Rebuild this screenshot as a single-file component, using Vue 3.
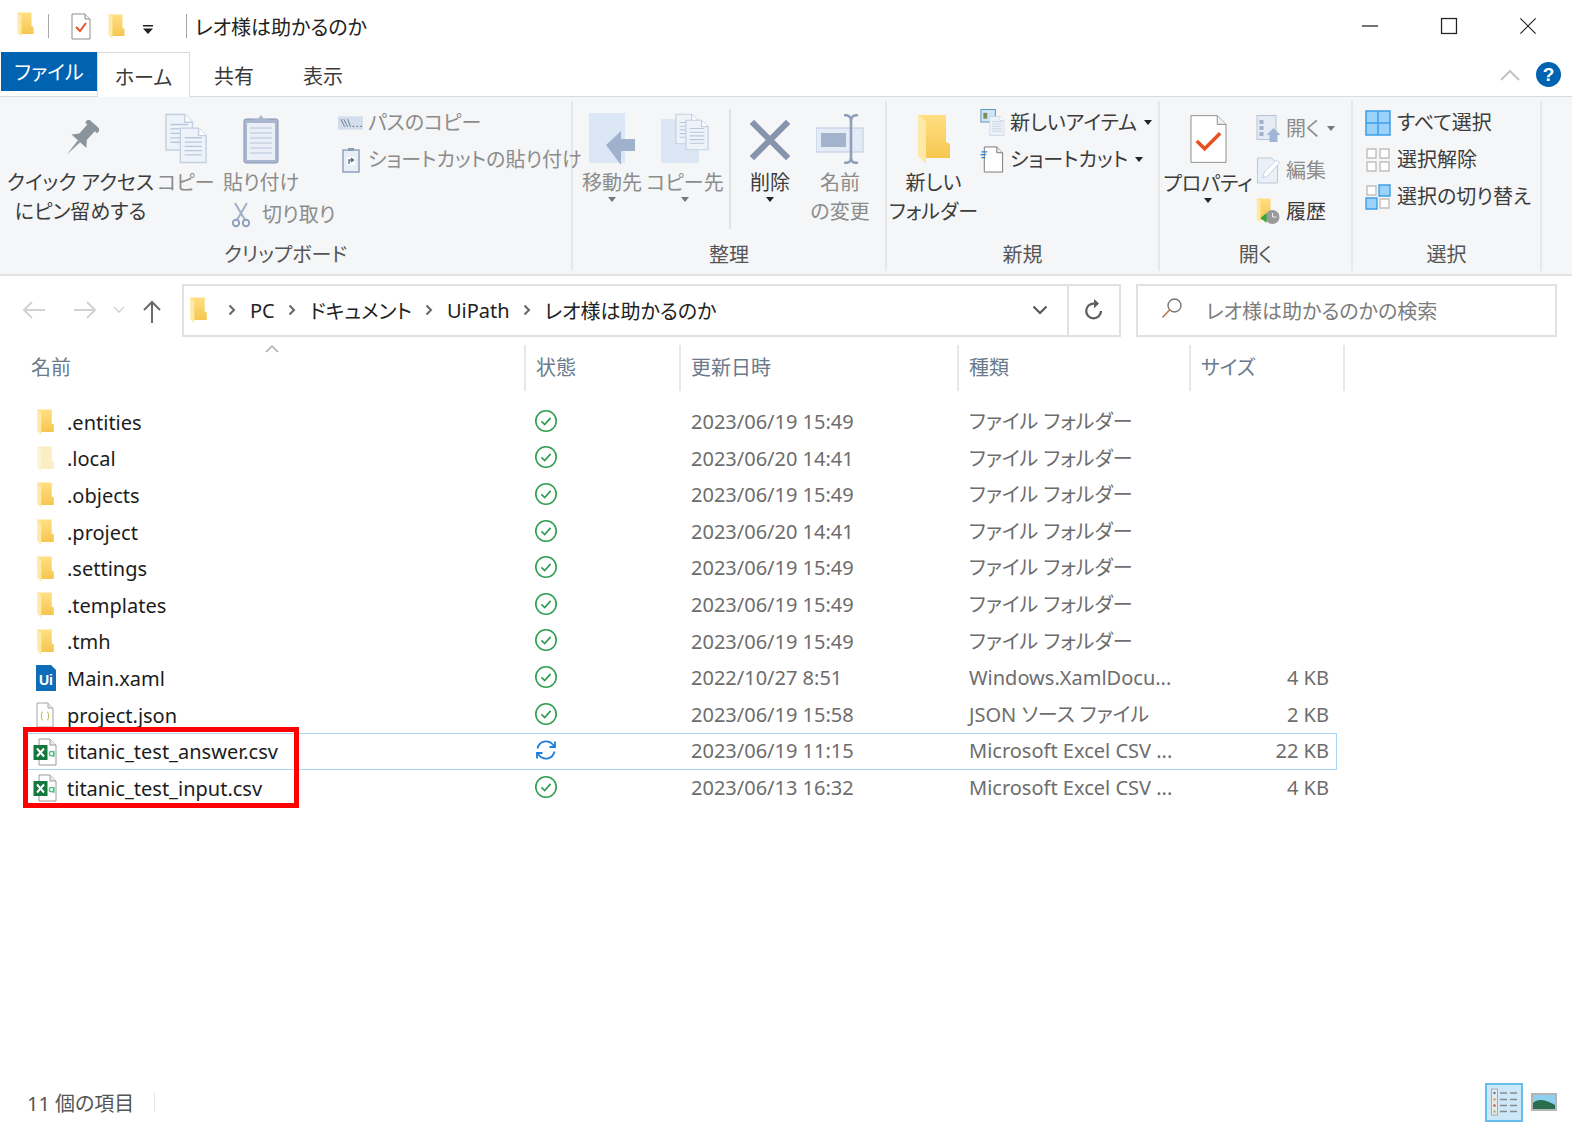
<script setup>
const rows = [
  { name: '.entities', icon: 'folder', date: '2023/06/19 15:49', type: 'ファイル フォルダー', size: '' },
  { name: '.local', icon: 'folder', faded: true, date: '2023/06/20 14:41', type: 'ファイル フォルダー', size: '' },
  { name: '.objects', icon: 'folder', date: '2023/06/19 15:49', type: 'ファイル フォルダー', size: '' },
  { name: '.project', icon: 'folder', date: '2023/06/20 14:41', type: 'ファイル フォルダー', size: '' },
  { name: '.settings', icon: 'folder', date: '2023/06/19 15:49', type: 'ファイル フォルダー', size: '' },
  { name: '.templates', icon: 'folder', date: '2023/06/19 15:49', type: 'ファイル フォルダー', size: '' },
  { name: '.tmh', icon: 'folder', date: '2023/06/19 15:49', type: 'ファイル フォルダー', size: '' },
  { name: 'Main.xaml', icon: 'ui', date: '2022/10/27 8:51', type: 'Windows.XamlDocu...', size: '4 KB' },
  { name: 'project.json', icon: 'json', date: '2023/06/19 15:58', type: 'JSON ソース ファイル', size: '2 KB' },
  { name: 'titanic_test_answer.csv', icon: 'xl', sync: true, hover: true, date: '2023/06/19 11:15', type: 'Microsoft Excel CSV ...', size: '22 KB' },
  { name: 'titanic_test_input.csv', icon: 'xl', date: '2023/06/13 16:32', type: 'Microsoft Excel CSV ...', size: '4 KB' },
]
const crumbs = ['PC', 'ドキュメント', 'UiPath', 'レオ様は助かるのか']
const columns = ['名前', '状態', '更新日時', '種類', 'サイズ']
</script>

<template>
  <div class="win">
    <svg class="defs" width="0" height="0">
      <defs>
        <linearGradient id="fg" x1="0" y1="0" x2="0" y2="1">
          <stop offset="0" stop-color="#ffdf83" /><stop offset="1" stop-color="#f6c64f" />
        </linearGradient>
        <symbol id="folder" viewBox="0 0 32 50">
          <path d="M0 1H28V28L32 30V44H6Z" fill="url(#fg)" />
          <path d="M0 1L8 7V50L0 42Z" fill="#fdeaa8" />
        </symbol>
        <symbol id="folderlight" viewBox="0 0 32 50">
          <path d="M0 1H28V28L32 30V44H6Z" fill="#fbeec4" />
          <path d="M0 1L8 7V50L0 42Z" fill="#fdf4d8" />
        </symbol>
        <symbol id="ok" viewBox="0 0 24 24">
          <circle cx="12" cy="12" r="10.2" fill="none" stroke="#2f9e50" stroke-width="1.6" />
          <path d="M7.4 12.4L10.7 15.6L16.6 8.9" fill="none" stroke="#2f9e50" stroke-width="1.7" />
        </symbol>
        <symbol id="sync" viewBox="0 0 24 24">
          <path d="M3.5 10.5A8.8 8.8 0 0 1 18.8 6.5L20.5 8.5M21 3.5V9H15.5" fill="none" stroke="#1a7fdc" stroke-width="1.8" />
          <path d="M20.5 13.5A8.8 8.8 0 0 1 5.2 17.5L3.5 15.5M3 20.5V15H8.5" fill="none" stroke="#1a7fdc" stroke-width="1.8" />
        </symbol>
        <symbol id="xl" viewBox="0 0 24 28">
          <path d="M6 1H17L23 7V27H6Z" fill="#fff" stroke="#9a9a9a" />
          <path d="M17 1V7H23" fill="#eee" stroke="#9a9a9a" />
          <rect x="0.5" y="7" width="14" height="15" fill="#14783f" />
          <path d="M4 10.5L11 18.5M11 10.5L4 18.5" stroke="#fff" stroke-width="2" />
          <circle cx="18.6" cy="15.6" r="2.2" fill="none" stroke="#42c07f" stroke-width="1.3" />
          <path d="M20.8 12.8V19" stroke="#42c07f" stroke-width="1.3" />
        </symbol>
        <symbol id="page" viewBox="0 0 26 34">
          <path d="M1 1H18L25 8V33H1Z" fill="#eef3fa" stroke="#c3d0e2" stroke-width="1.3" />
          <path d="M18 1V8H25" fill="#fff" stroke="#c3d0e2" stroke-width="1.3" />
          <path d="M5 10H21M5 14H21M5 18H21M5 22H21M5 26H21" stroke="#b8c7dc" stroke-width="1.2" />
        </symbol>
      </defs>
    </svg>

    <header class="title">
      <svg class="i-folder-s"><use href="#folder" /></svg>
      <i class="qsep first"></i>
      <svg class="qdoc" viewBox="0 0 20 27">
        <path d="M1 1H14L19 6V26H1Z" fill="#fff" stroke="#8d8d8d" />
        <path d="M14 1V6H19" fill="#eee" stroke="#8d8d8d" />
        <path d="M5 14L9 18L15 10" fill="none" stroke="#e8501f" stroke-width="2" />
      </svg>
      <svg class="i-folder-q"><use href="#folder" /></svg>
      <svg class="qarrow" viewBox="0 0 10 9"><path d="M0 0H10V1.4H0ZM0 3.4H10L5 9Z" fill="#222" /></svg>
      <i class="qsep"></i>
      <span class="title-text">レオ様は助かるのか</span>
      <div class="controls">
        <svg class="ctl" viewBox="0 0 20 20"><path d="M1 10H19" stroke="#222" stroke-width="1.4" /></svg>
        <svg class="ctl" viewBox="0 0 20 20"><rect x="1.7" y="1.7" width="16.6" height="16.6" fill="none" stroke="#222" stroke-width="1.4" /></svg>
        <svg class="ctl" viewBox="0 0 20 20"><path d="M1.5 1.5L18.5 18.5M18.5 1.5L1.5 18.5" stroke="#222" stroke-width="1.3" /></svg>
      </div>
    </header>

    <nav class="tabs">
      <span class="tab file">ファイル</span>
      <span class="tab home">ホーム</span>
      <span class="tab share">共有</span>
      <span class="tab view">表示</span>
      <svg class="collapse" viewBox="0 0 20 12"><path d="M1 11L10 2L19 11" fill="none" stroke="#c4c4c4" stroke-width="2" /></svg>
      <span class="help">?</span>
    </nav>

    <section class="ribbon">
      <div class="group g-clip">
        <div class="body">
          <div class="big c-pin">
            <div class="big-icon">
              <svg class="ic-pin" viewBox="0 0 36 38">
                <g transform="rotate(42 18 19)" fill="#8b949b">
                  <rect x="10" y="-1" width="16" height="5" />
                  <rect x="13" y="3" width="10" height="14" />
                  <path d="M8 22L13 16H23L28 22Z" />
                  <path d="M16.5 22H19.5L18 40Z" />
                </g>
              </svg>
            </div>
            <span class="lbl dark">クイック アクセス<br />にピン留めする</span>
          </div>
          <div class="big c-copy">
            <div class="big-icon">
              <svg class="ic-copy" viewBox="0 0 44 54">
                <use href="#page" x="0" y="0" width="30" height="40" />
                <use href="#page" x="15" y="13" width="29" height="41" />
              </svg>
            </div>
            <span class="lbl off">コピー</span>
          </div>
          <div class="big c-paste">
            <div class="big-icon">
              <svg class="ic-paste" viewBox="0 0 36 50">
                <rect x="1" y="5" width="34" height="44" rx="2" fill="#a9b6cf" stroke="#8796b4" />
                <rect x="4" y="9" width="28" height="37" fill="#e9eef7" />
                <path d="M7 14H29M7 19H29M7 24H29M7 29H29M7 34H29M7 39H29" stroke="#c6d2e4" stroke-width="1.4" />
                <path d="M11 9V5H15L18 1L21 5H25V9Z" fill="#a9b6cf" />
              </svg>
            </div>
            <span class="lbl off">貼り付け</span>
            <div class="small cut">
              <svg class="ic-cut" viewBox="0 0 18 26">
                <path d="M3 1L13 18M15 1L5 18" stroke="#a1afc8" stroke-width="2" fill="none" />
                <circle cx="4" cy="21" r="3.2" fill="none" stroke="#8fa0bf" stroke-width="2" />
                <circle cx="14" cy="21" r="3.2" fill="none" stroke="#8fa0bf" stroke-width="2" />
              </svg>
              <span class="lbl off">切り取り</span>
            </div>
          </div>
          <div class="smalls c-clipsmall">
            <div class="small">
              <span class="sbox">
                <svg class="ic-path" viewBox="0 0 26 14">
                  <rect width="26" height="14" fill="#d3deed" />
                  <path d="M3 3L7 11M6 3L10 11M10 3L13 11" stroke="#6d7d93" stroke-width="1" />
                  <path d="M15 10.5H17M19 10.5H21M23 10.5H25" stroke="#6d7d93" />
                </svg>
              </span>
              <span class="lbl off">パスのコピー</span>
            </div>
            <div class="small">
              <span class="sbox">
                <svg class="ic-sc" viewBox="0 0 18 26">
                  <rect x="1" y="3" width="16" height="22" fill="#e9eef6" stroke="#8b9cb8" stroke-width="1.4" />
                  <path d="M6 4V1H12V4Z" fill="#8b9cb8" />
                  <rect x="5" y="10" width="8" height="8" fill="#fff" />
                  <path d="M7 17V13H11M9 11L11.5 13L9 15" stroke="#5e6f8a" fill="none" stroke-width="1.4" />
                </svg>
              </span>
              <span class="lbl off">ショートカットの貼り付け</span>
            </div>
          </div>
        </div>
        <div class="glabel">クリップボード</div>
      </div>

      <div class="group g-org">
        <div class="body">
          <div class="big c-move">
            <div class="big-icon">
              <svg class="ic-move" viewBox="0 0 46 52">
                <rect x="0" y="0" width="36" height="50" fill="#dce7f6" />
                <path d="M17 32L32 18V26H46V38H32V52Z" fill="#9fb1cd" />
              </svg>
            </div>
            <span class="lbl off">移動先</span>
            <i class="caret off-c"></i>
          </div>
          <div class="big c-copyto">
            <div class="big-icon">
              <svg class="ic-copyto" viewBox="0 0 48 52">
                <rect x="0" y="6" width="38" height="44" fill="#dce7f6" />
                <use href="#page" x="14" y="0" width="24" height="32" />
                <use href="#page" x="24" y="4" width="24" height="36" />
              </svg>
            </div>
            <span class="lbl off">コピー先</span>
            <i class="caret off-c"></i>
          </div>
          <i class="vsep"></i>
          <div class="big c-del">
            <div class="big-icon">
              <svg class="ic-del" viewBox="0 0 44 44"><path d="M3 3L41 41M41 3L3 41" stroke="#8794ad" stroke-width="6.4" /></svg>
            </div>
            <span class="lbl dark">削除</span>
            <i class="caret"></i>
          </div>
          <div class="big c-ren">
            <div class="big-icon">
              <svg class="ic-ren" viewBox="0 0 48 50">
                <rect x="0" y="14" width="47" height="24" fill="#e3ebf7" stroke="#bccbe0" />
                <rect x="5" y="19" width="25" height="14" fill="#a3b3cb" />
                <path d="M28 1C35 1 35 5 35 8V42C35 46 35 49 28 49M42 1C35 1 35 5 35 8M35 42C35 46 35 49 42 49" fill="none" stroke="#8f9fba" stroke-width="2.6" />
              </svg>
            </div>
            <span class="lbl off">名前<br />の変更</span>
          </div>
        </div>
        <div class="glabel">整理</div>
      </div>

      <div class="group g-new">
        <div class="body">
          <div class="big c-newf">
            <div class="big-icon"><svg class="ic-newf"><use href="#folder" /></svg></div>
            <span class="lbl dark">新しい<br />フォルダー</span>
          </div>
          <div class="smalls">
            <div class="small">
              <span class="sbox">
                <svg class="ic-newi" viewBox="0 0 26 28">
                  <rect x="0.5" y="0.5" width="15" height="13" fill="#cfe6f7" stroke="#5d94b8" />
                  <rect x="3" y="4" width="4" height="6" fill="#7a8e5a" />
                  <use href="#page" x="9" y="7" width="16" height="21" />
                </svg>
              </span>
              <span class="lbl dark">新しいアイテム</span><i class="caret inline"></i>
            </div>
            <div class="small">
              <span class="sbox">
                <svg class="ic-news" viewBox="0 0 24 28">
                  <path d="M4 1H17L23 7V27H4Z" fill="#fff" stroke="#777" />
                  <path d="M17 1V7H23" fill="#eee" stroke="#777" />
                  <path d="M1 6H7M0 9H6M1 12H5" stroke="#2f7fd0" stroke-width="1.3" />
                </svg>
              </span>
              <span class="lbl dark">ショートカット</span><i class="caret inline"></i>
            </div>
          </div>
        </div>
        <div class="glabel">新規</div>
      </div>

      <div class="group g-open">
        <div class="body">
          <div class="big c-prop">
            <div class="big-icon">
              <svg class="ic-prop" viewBox="0 0 38 50">
                <path d="M1 1H28L37 10V49H1Z" fill="#fff" stroke="#8d8d8d" />
                <path d="M28 1V10H37" fill="#eee" stroke="#8d8d8d" />
                <path d="M7 27L15 35L31 19" fill="none" stroke="#e8501f" stroke-width="3.6" />
              </svg>
            </div>
            <span class="lbl dark prop">プロパティ</span>
            <i class="caret"></i>
          </div>
          <div class="smalls open-col">
            <div class="small">
              <span class="sbox">
                <svg class="ic-open" viewBox="0 0 24 27">
                  <rect x="0.5" y="0.5" width="19" height="24" fill="#e4ebf5" stroke="#b5c3d8" />
                  <path d="M3 5H7V9H3ZM3 11H7V15H3ZM3 17H7V21H3Z" fill="#a0b0c8" />
                  <path d="M17 13L24 20H21V27H13V20H10Z" fill="#a0b6d6" />
                </svg>
              </span>
              <span class="lbl off">開く</span><i class="caret inline off-c"></i>
            </div>
            <div class="small">
              <span class="sbox">
                <svg class="ic-open" viewBox="0 0 24 27">
                  <path d="M1 1H15L21 7V26H1Z" fill="#eaf0f8" stroke="#bccadc" />
                  <path d="M6 21L8 15L20 3L23 6L11 19Z" fill="#fff" stroke="#c4d1e2" />
                </svg>
              </span>
              <span class="lbl off">編集</span>
            </div>
            <div class="small">
              <span class="sbox">
                <svg class="ic-open" viewBox="0 0 24 27">
                  <use href="#folder" x="0" y="0" width="16" height="25" />
                  <circle cx="16" cy="19" r="7" fill="#9a9a9a" />
                  <path d="M4 20L10 15V25Z" fill="#2faa3a" />
                  <path d="M16 15V19H20" stroke="#eee" fill="none" />
                </svg>
              </span>
              <span class="lbl dark">履歴</span>
            </div>
          </div>
        </div>
        <div class="glabel">開く</div>
      </div>

      <div class="group g-sel">
        <div class="body">
          <div class="smalls">
            <div class="small">
              <span class="sbox wide">
                <svg class="ic-sel" viewBox="0 0 26 26">
                  <path d="M1 1H25V25H1ZM13 1V25M1 13H25" fill="#9bd2fb" stroke="#3d9fe6" stroke-width="1.5" />
                </svg>
              </span>
              <span class="lbl dark">すべて選択</span>
            </div>
            <div class="small">
              <span class="sbox wide">
                <svg class="ic-sel" viewBox="0 0 26 26">
                  <path d="M2 2H11V11H2ZM15 2H24V11H15ZM2 15H11V24H2ZM15 15H24V24H15Z" fill="#fff" stroke="#bfbfbf" stroke-width="1.4" />
                </svg>
              </span>
              <span class="lbl dark">選択解除</span>
            </div>
            <div class="small">
              <span class="sbox wide">
                <svg class="ic-sel" viewBox="0 0 26 26">
                  <path d="M2 2H11V11H2ZM15 15H24V24H15Z" fill="#fff" stroke="#bfbfbf" stroke-width="1.4" />
                  <path d="M14 1H25V12H14ZM1 14H12V25H1Z" fill="#9bd2fb" stroke="#3d9fe6" stroke-width="1.4" />
                </svg>
              </span>
              <span class="lbl dark">選択の切り替え</span>
            </div>
          </div>
        </div>
        <div class="glabel">選択</div>
      </div>
    </section>

    <div class="navrow">
      <div class="navbtns">
        <svg class="nav-a" viewBox="0 0 24 20"><path d="M23 10H2M10 2L2 10L10 18" fill="none" stroke="#d2d2d2" stroke-width="2" /></svg>
        <svg class="nav-b" viewBox="0 0 24 20"><path d="M1 10H22M14 2L22 10L14 18" fill="none" stroke="#d2d2d2" stroke-width="2" /></svg>
        <svg class="nav-c" viewBox="0 0 12 8"><path d="M1 1L6 6L11 1" fill="none" stroke="#d6d6d6" stroke-width="1.6" /></svg>
        <svg class="nav-d" viewBox="0 0 20 24"><path d="M10 23V2M2 10L10 2L18 10" fill="none" stroke="#6b6b6b" stroke-width="2" /></svg>
      </div>
      <div class="addr">
        <svg class="addr-folder"><use href="#folder" /></svg>
        <template v-for="c in crumbs" :key="c">
          <svg class="crumb-sep" viewBox="0 0 8 12"><path d="M1.5 1.5L6 6L1.5 10.5" fill="none" stroke="#666" stroke-width="2" /></svg>
          <span class="crumb">{{ c }}</span>
        </template>
        <svg class="addr-chev" viewBox="0 0 16 10"><path d="M1.5 1.5L8 8L14.5 1.5" fill="none" stroke="#555" stroke-width="2" /></svg>
        <div class="refresh">
          <svg class="refresh-i" viewBox="0 0 20 22"><path d="M17 12A7.4 7.4 0 1 1 10 4.6H14" fill="none" stroke="#5f5f5f" stroke-width="2.3" /><path d="M10 0L15 4.6L10 9.5Z" fill="#5f5f5f" /></svg>
        </div>
      </div>
      <div class="search">
        <svg class="search-i" viewBox="0 0 22 22"><circle cx="13.5" cy="8.5" r="6.5" fill="none" stroke="#777" stroke-width="1.4" /><path d="M8.5 13L1.5 20.5" stroke="#b07a55" stroke-width="1.6" /></svg>
        <span>レオ様は助かるのかの検索</span>
      </div>
    </div>

    <main class="list">
      <div class="cols">
        <div v-for="(c, i) in columns" :key="c" class="col" :class="'col' + i">
          {{ c }}
          <svg v-if="i === 0" class="sort" viewBox="0 0 14 8"><path d="M1 7L7 1L13 7" fill="none" stroke="#9a9a9a" stroke-width="1.2" /></svg>
        </div>
      </div>
      <div class="rows">
        <div v-for="r in rows" :key="r.name" class="row" :class="{ hover: r.hover }">
          <div class="c-name">
            <span class="ficon">
              <svg v-if="r.icon === 'folder'" class="f-folder"><use :href="r.faded ? '#folderlight' : '#folder'" /></svg>
              <svg v-else-if="r.icon === 'xl'" class="f-xl"><use href="#xl" /></svg>
              <svg v-else-if="r.icon === 'ui'" class="f-ui" viewBox="0 0 20 26">
                <path d="M0 0H15L20 5V26H0Z" fill="#0d6db8" />
                <text x="10" y="19.5" text-anchor="middle" class="ui-t">Ui</text>
              </svg>
              <svg v-else class="f-json" viewBox="0 0 18 26">
                <path d="M1 1H12L17 6V25H1Z" fill="#fff" stroke="#a5a5a5" />
                <path d="M12 1V6H17" fill="#eee" stroke="#a5a5a5" />
                <path d="M7 10C5 10 6 13 5.2 14C6 15 5 18 7 18M11 10C13 10 12 13 12.8 14C12 15 13 18 11 18" fill="none" stroke="#b6b54d" />
              </svg>
            </span>
            <span class="fname">{{ r.name }}</span>
          </div>
          <div class="c-state">
            <svg class="st"><use :href="r.sync ? '#sync' : '#ok'" /></svg>
          </div>
          <div class="c-date">{{ r.date }}</div>
          <div class="c-type">{{ r.type }}</div>
          <div class="c-size">{{ r.size }}</div>
        </div>
        <div class="redbox"></div>
      </div>
    </main>

    <footer class="status">
      <span class="count">11 個の項目</span>
      <i class="stsep"></i>
      <div class="viewbtns">
        <span class="vb active">
          <svg class="vb-list" viewBox="0 0 26 28">
            <rect x="0.5" y="1" width="6" height="26" fill="#e8e8e8" stroke="#aaa" />
            <path d="M2.5 4H4.5V6H2.5Z" fill="#2c74c9" /><path d="M2.5 10.5H4.5V12.5H2.5Z" fill="#c79a3b" /><path d="M2.5 16.5H4.5V18.5H2.5Z" fill="#c9352c" /><path d="M2.5 22.5H4.5V24.5H2.5Z" fill="#9eb04d" />
            <path d="M9 5H16M19 5H26M9 11.5H16M19 11.5H26M9 17.5H16M19 17.5H26M9 23.5H16M19 23.5H26" stroke="#8a8a8a" stroke-width="1.6" />
          </svg>
        </span>
        <svg class="vb-img" viewBox="0 0 26 18">
          <rect x="1" y="1" width="24" height="16" fill="#8fd0ee" stroke="#b5b5b5" stroke-width="2" />
          <path d="M2 10C8 5 14 7 24 12V16H2Z" fill="#2a6d4f" />
        </svg>
      </div>
    </footer>
  </div>
</template>

<style>
html, body { margin: 0; background: #fff; }
</style>

<style scoped>
.win {
  width: 1572px;
  height: 1125px;
  display: flex;
  flex-direction: column;
  overflow: hidden;
  background: #fff;
  font-family: "Noto Sans", "Noto Sans CJK JP", sans-serif;
  font-feature-settings: "palt";
  font-size: 20px;
  color: #222;
}
.defs { position: absolute; }
svg { display: block; flex: none; }

.title { height: 52px; display: flex; align-items: center; flex: none; }
.i-folder-s { width: 17px; height: 25px; margin-left: 17px; margin-top: -3px; }
.qsep { width: 1px; height: 24px; background: #a8a8a8; margin-left: 14px; }
.qsep.first { margin-right: 22px; }
.qdoc { width: 20px; height: 27px; }
.i-folder-q { width: 17px; height: 25px; margin-left: 17px; }
.qarrow { width: 10px; height: 9px; margin-left: 18px; margin-top: 6px; margin-right: 19px; }
.title-text { margin-left: 8px; font-size: 20px; color: #222; }
.controls { margin-left: auto; display: flex; padding-right: 35px; gap: 61px; }
.ctl { width: 18px; height: 18px; }

.tabs { height: 44px; display: flex; flex: none; align-items: stretch; position: relative; padding-left: 1px; }
.tab { display: flex; align-items: center; justify-content: center; color: #3a3a3a; }
.file { width: 96px; height: 39px; background: #0063b1; color: #fff; }
.home { width: 93px; height: 45px; background: #fff; border: 1px solid #dadbdc; border-bottom: 0; box-sizing: border-box; z-index: 1; padding-top: 3px; }
.share { width: 88px; padding-top: 2px; }
.view { width: 90px; padding-top: 2px; }
.collapse { width: 20px; height: 12px; margin-left: auto; align-self: center; margin-right: 16px; margin-top: 2px; }
.help { width: 25px; height: 25px; border-radius: 50%; background: #0063b1; color: #fff; align-self: center; margin-right: 11px; display: flex; align-items: center; justify-content: center; font: 700 19px "Liberation Sans", sans-serif; margin-top: 1px; }

.ribbon { height: 180px; flex: none; box-sizing: border-box; background: #f5f6f7; border-top: 1px solid #dadbdc; border-bottom: 2px solid #e2e3e4; display: flex; padding-top: 4px; }
.group { position: relative; display: flex; flex-direction: column; box-sizing: border-box; border-right: 2px solid #e6e7e8; height: 170px; }
.body { flex: 1; display: flex; padding-top: 8px; min-height: 0; }
.glabel { height: 30px; line-height: 30px; text-align: center; color: #555; margin-bottom: 1px; }
.g-clip { width: 573px; }
.g-org { width: 314px; }
.g-new { width: 273px; }
.g-open { width: 193px; }
.g-sel { width: 189px; }

.big { display: flex; flex-direction: column; align-items: center; flex: none; }
.big-icon { height: 59px; display: flex; align-items: center; justify-content: center; }
.lbl { line-height: 29px; white-space: nowrap; text-align: center; }
.dark { color: #3c3c3c; }
.off { color: #8c8c8c; }
.caret { width: 0; height: 0; border: 4.5px solid transparent; border-top: 5px solid #222; border-bottom: 0; display: block; margin-top: 0; }
.caret.off-c { border-top-color: #777; }
.caret.inline { margin-left: 7px; }

.c-pin { width: 161px; }
.ic-pin { width: 36px; height: 38px; }
.c-copy { width: 50px; }
.ic-copy { width: 44px; height: 52px; }
.c-paste { width: 100px; }
.ic-paste { width: 36px; height: 50px; }
.small { display: flex; align-items: center; height: 37px; }
.small .lbl { line-height: 37px; }
.cut { align-self: flex-start; margin-left: 21px; margin-top: -1px; }
.ic-cut { width: 18px; height: 26px; margin-right: 12px; }
.smalls { margin-top: -5px; }
.c-clipsmall { margin-left: 27px; }
.sbox { width: 30px; flex: none; display: flex; align-items: center; }
.sbox.wide { width: 32px; }
.ic-path { width: 25px; height: 14px; }
.ic-sc { width: 18px; height: 26px; margin-left: 4px; }

.g-org .body { padding-left: 5px; }
.c-move { width: 68px; }
.ic-move { width: 46px; height: 52px; }
.c-copyto { width: 78px; }
.ic-copyto { width: 48px; height: 52px; }
.vsep { width: 2px; height: 120px; background: #e2e3e4; margin-left: 5px; }
.c-del { width: 78px; }
.ic-del { width: 44px; height: 42px; margin-top: 2px; }
.c-ren { width: 62px; }
.ic-ren { width: 48px; height: 50px; }

.c-newf { width: 93px; }
.ic-newf { width: 32px; height: 50px; }
.ic-newi { width: 26px; height: 27px; }
.ic-news { width: 24px; height: 27px; }

.c-prop { width: 96px; }
.ic-prop { width: 37px; height: 50px; }
.prop { margin-top: 1px; }
.open-col { margin-top: -1px; }
.open-col .small { height: 41.5px; }
.ic-open { width: 25px; height: 27px; }

.g-sel .body { padding-left: 12px; }
.ic-sel { width: 26px; height: 26px; }

.navrow { height: 66px; flex: none; display: flex; align-items: center; padding-top: 2px; box-sizing: border-box; }
.navbtns { width: 182px; flex: none; display: flex; align-items: center; }
.nav-a { width: 24px; height: 20px; margin-left: 22px; }
.nav-b { width: 24px; height: 20px; margin-left: 27px; }
.nav-c { width: 12px; height: 8px; margin-left: 16px; }
.nav-d { width: 20px; height: 24px; margin-left: 17px; margin-top: 4px; }
.addr { width: 939px; height: 53px; box-sizing: border-box; border: 2px solid #e1e1e1; display: flex; align-items: center; flex: none; }
.addr-folder { width: 17px; height: 26px; margin-left: 6px; margin-right: 8px; }
.crumb-sep { width: 8px; height: 12px; margin: 0 14px 0 13px; }
.crumb { color: #222; }
.addr-chev { width: 16px; height: 10px; margin-left: auto; margin-right: 19px; }
.refresh { width: 52px; height: 100%; border-left: 2px solid #e1e1e1; display: flex; align-items: center; justify-content: center; box-sizing: border-box; }
.refresh-i { width: 20px; height: 22px; }
.search { width: 421px; height: 53px; margin-left: 15px; box-sizing: border-box; border: 2px solid #e1e1e1; display: flex; align-items: center; color: #7c7c7c; flex: none; }
.search-i { width: 22px; height: 22px; margin-left: 23px; margin-right: 23px; margin-top: -4px; }

.list { flex: 1; min-height: 0; }
.cols { display: grid; grid-template-columns: 526px 155px 278px 232px 154px; height: 46px; margin-top: 3px; }
.col { position: relative; box-sizing: border-box; color: #6a7a8c; line-height: 46px; border-right: 2px solid #e8e8e8; padding-left: 10px; }
.col0 { padding-left: 31px; }
.sort { position: absolute; left: 265px; top: 0; width: 14px; height: 8px; }

.rows { position: relative; margin-top: 13px; }
.row { display: grid; grid-template-columns: 527px 154px 278px 232px 146px; height: 36.6px; line-height: 35px; margin-left: 0; width: 1337px; position: relative; box-sizing: border-box; padding-left: 0; }
.row.hover::after { content: ""; position: absolute; left: 26px; right: 0; top: 0; bottom: 0; border: 1px solid #a9d6f7; pointer-events: none; }
.c-name { display: flex; align-items: center; }
.ficon { width: 67px; flex: none; display: flex; align-items: center; }
.f-folder { width: 17px; height: 26px; margin-left: 37px; }
.f-xl { width: 24px; height: 28px; margin-left: 33px; }
.f-ui { width: 20px; height: 26px; margin-left: 36px; }
.f-json { width: 18px; height: 26px; margin-left: 36px; }
.ui-t { font: 700 14px "Liberation Sans", sans-serif; fill: #fff; }
.fname { color: #1c1c1c; }
.c-state { display: flex; align-items: center; padding-left: 7px; }
.st { width: 24px; height: 24px; margin-top: -3px; }
.c-date, .c-type { color: #6d6d6d; padding-left: 10px; }
.c-size { color: #6d6d6d; text-align: right; padding-right: 8px; }
.redbox { position: absolute; left: 23px; top: 323px; width: 276px; height: 81px; box-sizing: border-box; border: 5px solid #f00; pointer-events: none; }

.status { height: 46px; flex: none; display: flex; align-items: center; }
.count { margin-left: 27px; color: #555; }
.stsep { width: 1px; height: 20px; background: #e8e8e8; margin-left: 20px; }
.viewbtns { margin-left: auto; display: flex; align-items: center; margin-right: 15px; gap: 8px; }
.vb { width: 38px; height: 39px; box-sizing: border-box; background: #cce8f8; border: 2px solid #66bde8; display: flex; align-items: center; justify-content: center; }
.vb-list { width: 26px; height: 28px; }
.vb-img { width: 26px; height: 18px; }
</style>
